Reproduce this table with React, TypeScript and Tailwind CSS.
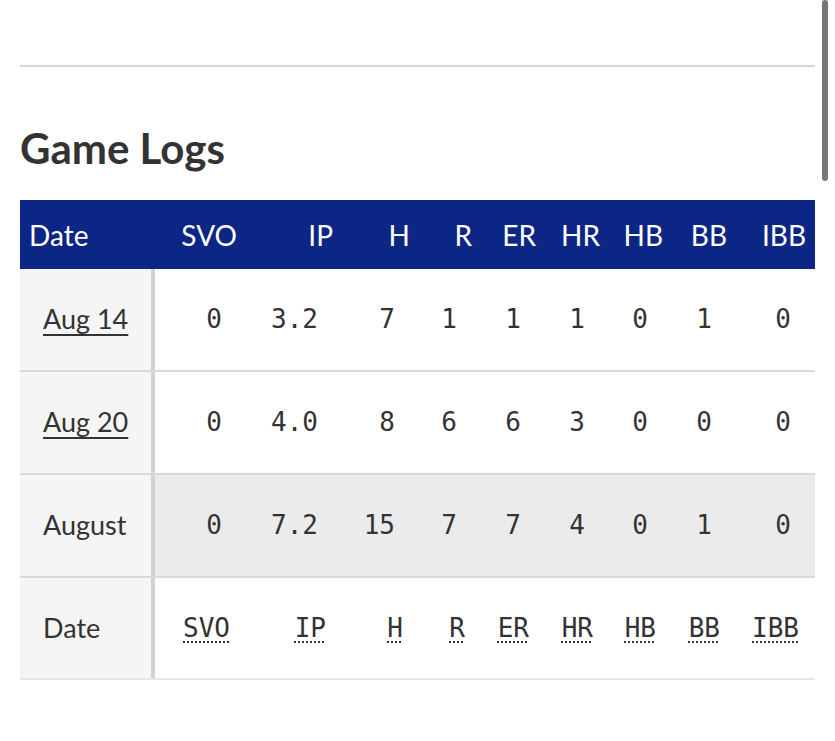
import React from "react";

const cols = ["SVO", "IP", "H", "R", "ER", "HR", "HB", "BB", "IBB"];
const rows: { date: string; link: boolean; vals: string[]; total?: boolean }[] = [
  { date: "Aug 14", link: true, vals: ["0", "3.2", "7", "1", "1", "1", "0", "1", "0"] },
  { date: "Aug 20", link: true, vals: ["0", "4.0", "8", "6", "6", "3", "0", "0", "0"] },
  { date: "August", link: false, vals: ["0", "7.2", "15", "7", "7", "4", "0", "1", "0"], total: true },
];

const grid = "grid grid-cols-[135px_91px_96px_77px_62px_64px_64px_63px_64px_79px]";
const lato = { fontFamily: "Lato, 'Open Sans', sans-serif" };
const mono = { fontFamily: "'DejaVu Sans Mono', 'Liberation Mono', monospace" };

export default function App() {
  return (
    <div className="relative w-[835px] h-[741px] bg-white overflow-hidden text-[#333]" style={lato}>
      <div className="absolute right-[7px] top-0 w-[6px] h-[181px] rounded-full bg-[#777]" />
      <div className="pt-[65px] px-[20px]">
        <div className="h-[2px] bg-[#d6d6d6]" />
        <h2 className="mt-[55px] text-[42px] leading-[52px] font-bold text-[#333]">Game Logs</h2>
        <div className="mt-[26px]">
          <div className={`${grid} h-[69px] bg-[#0c2686] text-white text-[28px] items-center`}>
            <div className="pl-[9px] text-left">Date</div>
            {cols.map((c) => (
              <div key={c} className="text-right pr-[9px]">{c}</div>
            ))}
          </div>
          {rows.map((r) => (
            <div key={r.date} className={`${grid} h-[103px] border-b-2 border-[#d9d9d9] ${r.total ? "bg-[#ebebeb]" : "bg-white"}`}>
              <div className="bg-[#f5f5f5] border-r-[4px] border-[#d2d2d2] flex items-center pl-[23px] text-[27px]">
                {r.link ? <span className="underline underline-offset-[5px] decoration-[1.5px]">{r.date}</span> : <span>{r.date}</span>}
              </div>
              {r.vals.map((v, i) => (
                <div key={i} className="flex items-center justify-end pr-[24px] text-[26px] text-[#333]" style={mono}>
                  {v}
                </div>
              ))}
            </div>
          ))}
          <div className={`${grid} h-[102px] border-b-2 border-[#e6e6e6]`}>
            <div className="bg-[#f5f5f5] border-r-[4px] border-[#d2d2d2] flex items-center pl-[23px] text-[27px]">
              Date
            </div>
            {cols.map((c) => (
              <div key={c} className="flex items-center justify-end pr-[16px] text-[26px]" style={mono}>
                <abbr className="underline decoration-dotted underline-offset-[5px] decoration-[2px] cursor-help">{c}</abbr>
              </div>
            ))}
          </div>
        </div>
      </div>
    </div>
  );
}
